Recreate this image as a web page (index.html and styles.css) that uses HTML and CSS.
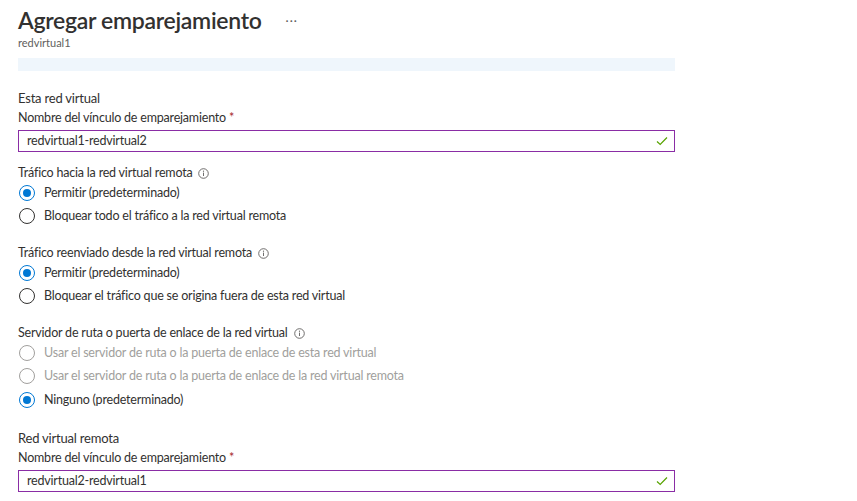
FILE: index.html
```html
<!DOCTYPE html>
<html lang="es">
<head>
<meta charset="utf-8">
<title>Agregar emparejamiento</title>
<link rel="stylesheet" href="styles.css">
</head>
<body>
<div class="page">
  <header class="head">
    <div class="title-row">
      <h1 class="title">Agregar emparejamiento</h1>
      <span class="more">···</span>
    </div>
    <div class="subtitle">redvirtual1</div>
  </header>
  <div class="banner"></div>

  <section class="section first">
    <div class="section-title">Esta red virtual</div>
    <label class="field-label">Nombre del vínculo de emparejamiento <span class="req">*</span></label>
    <div class="input">
      <span class="input-text">redvirtual1-redvirtual2</span>
      <svg class="check" width="12" height="10" viewBox="0 0 12 10"><path d="M1 5.5 L4.2 8.5 L11 1.5" fill="none" stroke="#57a300" stroke-width="1.2"/></svg>
    </div>
  </section>

  <section class="group">
    <div class="group-label">Tráfico hacia la red virtual remota <span class="info"><svg width="11" height="11" viewBox="0 0 11 11"><circle cx="5.5" cy="5.5" r="4.8" fill="none" stroke="#605e5c" stroke-width="0.9"/><path d="M5.5 4.6 V8" stroke="#605e5c" stroke-width="0.9"/><circle cx="5.5" cy="3.2" r="0.6" fill="#605e5c"/></svg></span></div>
    <div class="radio checked"><span class="dot"></span><span>Permitir (predeterminado)</span></div>
    <div class="radio"><span class="dot"></span><span>Bloquear todo el tráfico a la red virtual remota</span></div>
  </section>

  <section class="group">
    <div class="group-label">Tráfico reenviado desde la red virtual remota <span class="info"><svg width="11" height="11" viewBox="0 0 11 11"><circle cx="5.5" cy="5.5" r="4.8" fill="none" stroke="#605e5c" stroke-width="0.9"/><path d="M5.5 4.6 V8" stroke="#605e5c" stroke-width="0.9"/><circle cx="5.5" cy="3.2" r="0.6" fill="#605e5c"/></svg></span></div>
    <div class="radio checked"><span class="dot"></span><span>Permitir (predeterminado)</span></div>
    <div class="radio"><span class="dot"></span><span>Bloquear el tráfico que se origina fuera de esta red virtual</span></div>
  </section>

  <section class="group">
    <div class="group-label">Servidor de ruta o puerta de enlace de la red virtual <span class="info"><svg width="11" height="11" viewBox="0 0 11 11"><circle cx="5.5" cy="5.5" r="4.8" fill="none" stroke="#605e5c" stroke-width="0.9"/><path d="M5.5 4.6 V8" stroke="#605e5c" stroke-width="0.9"/><circle cx="5.5" cy="3.2" r="0.6" fill="#605e5c"/></svg></span></div>
    <div class="radio disabled"><span class="dot"></span><span>Usar el servidor de ruta o la puerta de enlace de esta red virtual</span></div>
    <div class="radio disabled"><span class="dot"></span><span>Usar el servidor de ruta o la puerta de enlace de la red virtual remota</span></div>
    <div class="radio checked"><span class="dot"></span><span>Ninguno (predeterminado)</span></div>
  </section>

  <section class="section last">
    <div class="section-title">Red virtual remota</div>
    <label class="field-label">Nombre del vínculo de emparejamiento <span class="req">*</span></label>
    <div class="input">
      <span class="input-text">redvirtual2-redvirtual1</span>
      <svg class="check" width="12" height="10" viewBox="0 0 12 10"><path d="M1 5.5 L4.2 8.5 L11 1.5" fill="none" stroke="#57a300" stroke-width="1.2"/></svg>
    </div>
  </section>
</div>
</body>
</html>
```

FILE: styles.css
```css
* { box-sizing: border-box; }
html, body { margin: 0; padding: 0; background: #fff; }
body {
  font-family: Lato, "Noto Sans", sans-serif;
  font-size: 12.5px;
  letter-spacing: -0.2px;
  color: #323130;
  overflow: hidden;
}
.page {
  width: 657px;
  margin-left: 18px;
  display: flex;
  flex-direction: column;
}
.head { padding-top: 4px; }
.title-row { display: flex; align-items: center; height: 32px; }
.title {
  margin: 0;
  font-size: 23px;
  font-weight: 600;
  color: #323130;
  line-height: 32px;
  letter-spacing: -0.3px;
}
.more {
  margin-left: 24px;
  font-size: 12px;
  color: #605e5c;
  letter-spacing: 1px;
}
.subtitle {
  font-size: 11px;
  color: #605e5c;
  line-height: 14px;
  letter-spacing: 0;
}
.banner {
  margin-top: 8px;
  height: 13px;
  background: #eff6fc;
}
.section { display: flex; flex-direction: column; }
.section.first { margin-top: 19px; }
.section.last { margin-top: 18.5px; }
.section-title { font-size: 13px; line-height: 16px; }
.field-label { margin-top: 4px; line-height: 16px; }
.req { color: #a4262c; }
.input {
  margin-top: 4px;
  height: 22px;
  border: 1px solid #8a2da5;
  display: flex;
  align-items: center;
  justify-content: space-between;
  padding: 0 6px 0 8px;
}
.input-text { line-height: 18px; }
.check { display: block; }
.group { display: flex; flex-direction: column; margin-top: 17px; }
.section.first + .group { margin-top: 13px; }
.group-label { line-height: 16px; display: flex; align-items: center; gap: 6px; }
.info { display: inline-flex; }
.radio {
  display: flex;
  align-items: center;
  gap: 9px;
  height: 23.5px;
  line-height: 16px;
}
.dot {
  width: 16px;
  height: 16px;
  margin-left: 1px;
  border-radius: 50%;
  border: 1px solid #323130;
  position: relative;
  flex: none;
}
.radio.checked .dot { border-color: #0078d4; }
.radio.checked .dot::after {
  content: "";
  position: absolute;
  left: 3px;
  top: 3px;
  width: 8px;
  height: 8px;
  border-radius: 50%;
  background: #0078d4;
}
.radio.disabled { color: #a19f9d; }
.radio.disabled .dot { border-color: #a19f9d; }
```
